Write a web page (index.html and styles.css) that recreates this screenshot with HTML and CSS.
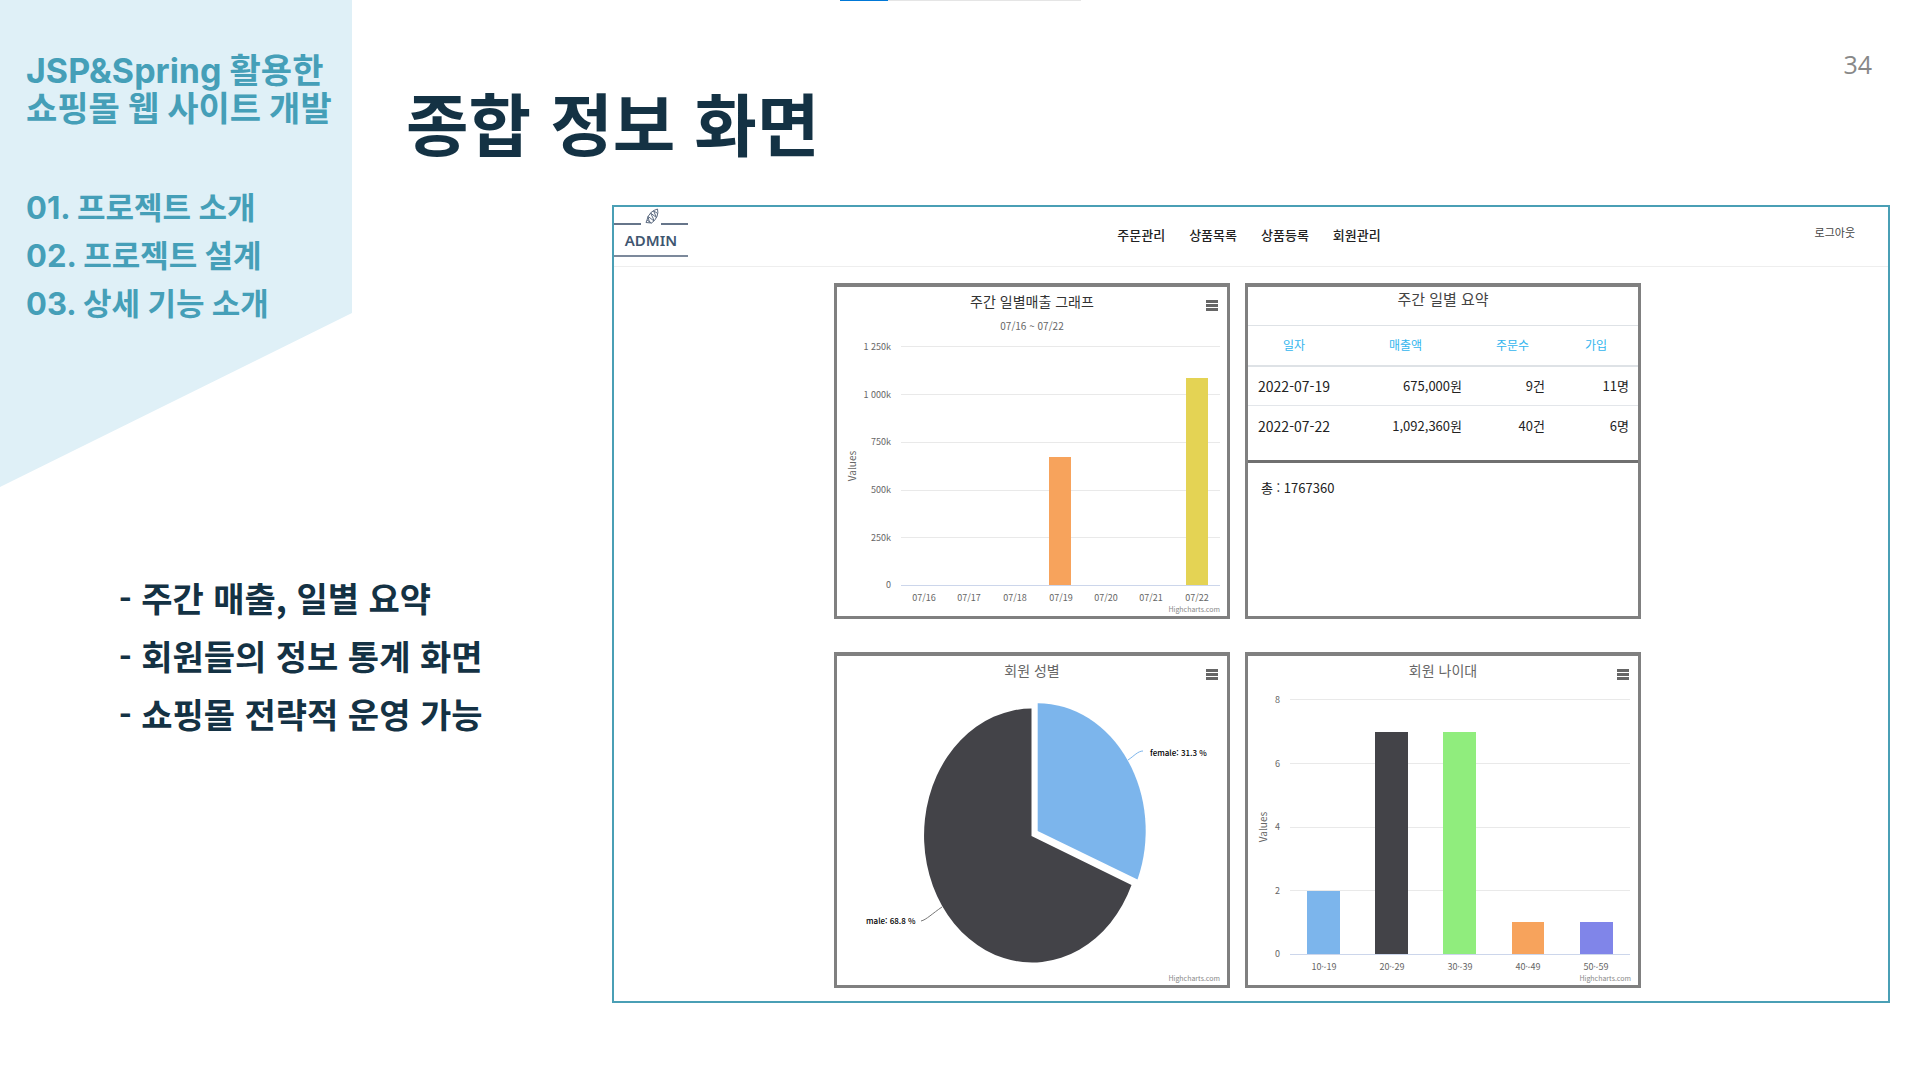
FILE: index.html
```html
<!DOCTYPE html>
<html lang="ko">
<head>
<meta charset="utf-8">
<meta name="viewport" content="width=device-width, initial-scale=1">
<title>종합 정보 화면</title>
<link rel="stylesheet" href="styles.css">
</head>
<body>
<div class="load-bar"><div class="load-bar-fill"></div></div>
<main class="slide">
  <aside class="outline">
    <div class="outline-title">
      <p>JSP&amp;Spring 활용한</p>
      <p>쇼핑몰 웹 사이트 개발</p>
    </div>
    <ul class="outline-list">
      <li>01. 프로젝트 소개</li>
      <li>02. 프로젝트 설계</li>
      <li>03. 상세 기능 소개</li>
    </ul>
  </aside>

  <header class="slide-head">
    <h1 class="slide-title">종합 정보 화면</h1>
    <span class="page-number">34</span>
  </header>

  <ul class="points">
    <li>- 주간 매출, 일별 요약</li>
    <li>- 회원들의 정보 통계 화면</li>
    <li>- 쇼핑몰 전략적 운영 가능</li>
  </ul>

  <section class="admin">
    <header class="admin-head">
      <div class="logo">
        <div class="logo-top">
          <svg class="logo-mark" viewBox="0 0 14 16" aria-hidden="true">
            <path d="M12.500 1Q9 2 6 4.500L3 8.500L2 12L1 14.500L6.500 15L9.500 12.500L12 8.500Q13.500 4.500 12.500 1Z M8.500 2.800L12.800 5.500M5.500 5L11.500 9.500M3.200 8.500L9 13M5.500 5L8 10L9 13M3 8.500L4.500 14.500M2 12L6.500 15M8.500 2.800L11.500 9.500"/>
          </svg>
        </div>
        <span class="logo-name">ADMIN</span>
      </div>
      <nav class="menu">
        <a href="#">주문관리</a>
        <a href="#">상품목록</a>
        <a href="#">상품등록</a>
        <a href="#">회원관리</a>
      </nav>
      <a class="logout" href="#">로그아웃</a>
    </header>

    <div class="cards">
      <article class="card">
        <button class="card-menu" type="button" aria-label="차트 메뉴"><svg viewBox="0 0 12 12"><path d="M0 1.500H12M0 5.500H12M0 9.500H12"/></svg></button>
        <svg class="chart" viewBox="0 0 390 329">
          <text class="chart-title dark" x="195" y="20">주간 일별매출 그래프</text>
          <text class="chart-subtitle" x="195" y="43">07/16 ~ 07/22</text>
          <path class="grid-line" d="M64 59.500H383M64 107.500H383M64 155.500H383M64 203.500H383M64 250.500H383"/>
          <path class="axis-line" d="M64 298.500H383"/>
          <g class="y-label">
            <text x="54" y="63">1 250k</text><text x="54" y="111">1 000k</text><text x="54" y="158">750k</text>
            <text x="54" y="206">500k</text><text x="54" y="254">250k</text><text x="54" y="301">0</text>
          </g>
          <text class="axis-title" transform="translate(19 179) rotate(-90)">Values</text>
          <rect class="c-orange" x="212" y="170" width="22" height="128"/>
          <rect class="c-yellow" x="349" y="91" width="22" height="207"/>
          <g class="x-label">
            <text x="87" y="314">07/16</text><text x="132" y="314">07/17</text><text x="178" y="314">07/18</text>
            <text x="224" y="314">07/19</text><text x="269" y="314">07/20</text><text x="314" y="314">07/21</text>
            <text x="360" y="314">07/22</text>
          </g>
          <text class="credit" x="383" y="325">Highcharts.com</text>
        </svg>
      </article>

      <article class="card summary">
        <h2 class="summary-title">주간 일별 요약</h2>
        <table class="sales">
          <thead>
            <tr><th class="col-date">일자</th><th class="col-sales">매출액</th><th class="col-count">주문수</th><th>가입</th></tr>
          </thead>
          <tbody>
            <tr><td class="date">2022-07-19</td><td>675,000원</td><td>9건</td><td>11명</td></tr>
            <tr><td class="date">2022-07-22</td><td>1,092,360원</td><td>40건</td><td>6명</td></tr>
          </tbody>
        </table>
        <p class="total">총 : 1767360</p>
      </article>

      <article class="card">
        <button class="card-menu" type="button" aria-label="차트 메뉴"><svg viewBox="0 0 12 12"><path d="M0 1.500H12M0 5.500H12M0 9.500H12"/></svg></button>
        <svg class="chart" viewBox="0 0 390 329">
          <text class="chart-title" x="195" y="20">회원 성별</text>
          <path class="c-dark" d="M194.500 180V52.500A108 127 0 1 0 294.500 229Z"/>
          <path class="c-blue" d="M200.700 175V47.300A108 127.500 0 0 1 300.500 223.500Z"/>
          <path class="link-blue" d="M291 104C297 100 301 95 306 95"/>
          <path class="link-dark" d="M84 265C89 264 96 257 105 251"/>
          <text class="slice-label" x="313" y="100">female: 31.3 %</text>
          <text class="slice-label" x="29" y="268">male: 68.8 %</text>
          <text class="credit" x="383" y="325">Highcharts.com</text>
        </svg>
      </article>

      <article class="card">
        <button class="card-menu" type="button" aria-label="차트 메뉴"><svg viewBox="0 0 12 12"><path d="M0 1.500H12M0 5.500H12M0 9.500H12"/></svg></button>
        <svg class="chart" viewBox="0 0 390 329">
          <text class="chart-title" x="195" y="20">회원 나이대</text>
          <path class="grid-line" d="M42 43.500H382M42 107.500H382M42 171.500H382M42 234.500H382"/>
          <path class="axis-line" d="M42 298.500H382"/>
          <g class="y-label">
            <text x="32" y="47">8</text><text x="32" y="111">6</text><text x="32" y="174">4</text>
            <text x="32" y="238">2</text><text x="32" y="301">0</text>
          </g>
          <text class="axis-title" transform="translate(19 171) rotate(-90)">Values</text>
          <rect class="c-blue" x="59" y="235" width="33" height="63"/>
          <rect class="c-dark" x="127" y="76" width="33" height="222"/>
          <rect class="c-green" x="195" y="76" width="33" height="222"/>
          <rect class="c-orange" x="264" y="266" width="32" height="32"/>
          <rect class="c-violet" x="332" y="266" width="33" height="32"/>
          <g class="x-label">
            <text x="76" y="314">10~19</text><text x="144" y="314">20~29</text><text x="212" y="314">30~39</text>
            <text x="280" y="314">40~49</text><text x="348" y="314">50~59</text>
          </g>
          <text class="credit" x="383" y="325">Highcharts.com</text>
        </svg>
      </article>
    </div>
  </section>
</main>
</body>
</html>
```
FILE: styles.css
```css
* { box-sizing: border-box; }

body {
  margin: 0;
  min-height: 100vh;
  background: #fff;
  color: #143244;
  font-family: "Noto Sans CJK KR", sans-serif;
}

h1, h2, p, ul { margin: 0; padding: 0; }
ul { list-style: none; }
a { color: inherit; text-decoration: none; }

.load-bar {
  position: absolute;
  top: 0;
  left: 50%;
  width: 241px;
  height: 1px;
  margin-left: -120px;
  background: #e5e5e5;
}
.load-bar-fill { width: 20%; height: 1px; background: #0078d7; }

.slide {
  display: grid;
  grid-template-columns: 352px 260px 1fr;
  grid-template-rows: 205px auto;
  padding-right: 30px;
}

/* left outline */
.outline {
  grid-area: 1 / 1 / 3 / 2;
  height: 487px;
  padding: 52px 0 0 26px;
  background: #dff0f7;
  clip-path: polygon(0 0, 100% 0, 100% 313px, 0 100%);
  color: #459fb8;
  font-family: Inter, "Noto Sans CJK KR", sans-serif;
  font-weight: 700;
  white-space: nowrap;
}
.outline-title { font-size: 34px; line-height: 38px; }
.outline-list { margin-top: 56px; font-size: 31px; line-height: 48px; }

.slide-head {
  grid-area: 1 / 2 / 2 / 4;
  display: flex;
  justify-content: space-between;
  padding: 48px 18px 0 54px;
}
.slide-title { margin-top: 22px; font-size: 68px; line-height: 104px; font-weight: 700; }
.page-number { color: #888; font: 400 25px/32px "Open Sans", sans-serif; }

.points {
  grid-area: 2 / 1 / 3 / 3;
  padding: 364px 0 0 119px;
  font-size: 34px;
  line-height: 58px;
  font-weight: 700;
  white-space: nowrap;
}

/* admin screen */
.admin {
  grid-area: 2 / 3 / 3 / 4;
  border: 2px solid #4a9fb5;
  padding-bottom: 13px;
}
.admin-head {
  display: grid;
  grid-template-columns: 1fr auto 1fr;
  height: 60px;
  border-bottom: 1px solid #eee;
  color: #222;
}
.logo { width: 74px; height: 50px; border-bottom: 2px solid #7c899b; text-align: center; }
.logo-top { display: flex; align-items: flex-end; height: 18px; }
.logo-top::before, .logo-top::after { content: ""; flex: 1; height: 2px; background: #66758a; }
.logo-mark { width: 14px; height: 16px; margin: 0 2px 1px 4px; fill: none; stroke: #5d6c82; stroke-width: 1; }
.logo-name { display: block; color: #3f5670; font: 600 15px/30px "Noto Sans", sans-serif; }
.menu { display: flex; gap: 24px; padding: 18px 4px 0 0; font-size: 13px; line-height: 20px; font-weight: 500; }
.logout { justify-self: end; padding: 15px 33px 0 0; color: #444; font-size: 11px; line-height: 20px; }

.cards {
  display: grid;
  grid-template-columns: 1fr 1fr;
  gap: 33px 15px;
  padding: 16px 247px 0 220px;
}
.card {
  position: relative;
  min-height: 336px;
  border: 3px solid #808080;
  border-top-width: 4px;
}
.chart { display: block; width: 100%; height: auto; }
.card-menu {
  position: absolute;
  top: 13px;
  right: 9px;
  width: 12px;
  height: 12px;
  padding: 0;
  border: 0;
  background: none;
}
.card-menu svg { display: block; stroke: #666; stroke-width: 3; }

.chart text { font-family: "Noto Sans CJK KR", sans-serif; fill: #666; }
.chart-title { font-size: 14px; text-anchor: middle; }
.chart .dark { fill: #333; }
.chart-subtitle, .axis-title { font-size: 10px; text-anchor: middle; }
.y-label { font-size: 9px; text-anchor: end; }
.x-label { font-size: 9px; text-anchor: middle; }
.chart .credit { font-size: 7px; text-anchor: end; fill: #888; }
.chart .slice-label { font-size: 8px; font-weight: 500; fill: #000; }
.grid-line { stroke: #e9e9e9; }
.axis-line { stroke: #ccd6eb; }
.c-orange { fill: #f7a35c; }
.c-yellow { fill: #e4d354; }
.c-blue { fill: #7cb5ec; }
.c-dark { fill: #434348; }
.c-green { fill: #90ed7d; }
.c-violet { fill: #8085e9; }
.link-blue { fill: none; stroke: #7cb5ec; }
.link-dark { fill: none; stroke: #777; }

/* daily summary */
.summary { color: #222; }
.summary-title { height: 38px; font-size: 15px; line-height: 24px; font-weight: 400; text-align: center; color: #444; }
.sales { width: 100%; border-collapse: collapse; table-layout: fixed; font-size: 13px; line-height: 20px; }
.sales th { height: 40px; padding: 0; border-top: 1px solid #dee2e6; border-bottom: 2px solid #dee2e6; color: #33b5ee; font-size: 12px; font-weight: 400; }
.sales td { height: 40px; padding: 0 9px 0 0; border-bottom: 1px solid #e3e6ea; text-align: right; }
.sales tr:last-child td { border-bottom: 0; }
.sales .date { padding: 0; font-size: 14px; text-align: center; }
.col-date { width: 92px; }
.col-sales { width: 131px; }
.col-count { width: 83px; }
.total { margin-top: 14px; padding: 15px 13px; border-top: 3px solid #707070; font-size: 13px; line-height: 20px; }
```
